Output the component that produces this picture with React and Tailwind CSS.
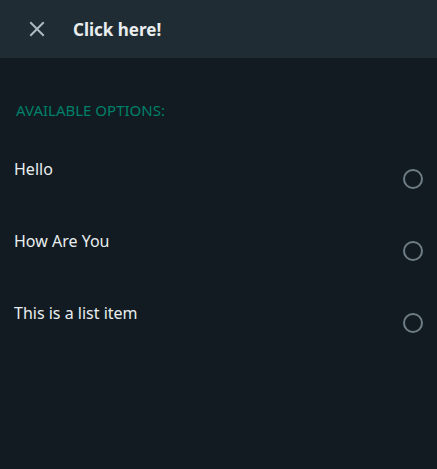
import React from 'react';

const options = ['Hello', 'How Are You', 'This is a list item'];

const App = () => {
  return (
    <div className="min-h-screen w-full bg-[#111b21] font-['Noto_Sans','Open_Sans',sans-serif]">
      {/* Header */}
      <div className="h-[58px] bg-[#202c33] flex items-center pl-[29px]">
        <svg width="16" height="16" viewBox="0 0 16 16" className="text-[#aebac1]">
          <path d="M2 2 L14 14 M14 2 L2 14" stroke="currentColor" strokeWidth="2" strokeLinecap="square" />
        </svg>
        <h1 className="ml-[28px] mt-[2px] text-[17px] font-bold text-[#e9edef]">Click here!</h1>
      </div>

      {/* Options */}
      <div className="pt-[42px]">
        <p className="pl-4 text-[15px] leading-5 text-[#008069]">AVAILABLE OPTIONS:</p>
        <div className="mt-[28px]">
          {options.map((label) => (
            <div key={label} className="h-[72px] flex items-start justify-between pl-[14px] pr-[14px]">
              <span className="pt-[11px] text-[16px] leading-5 text-[#e9edef]">{label}</span>
              <span className="mt-[21px] w-5 h-5 rounded-full border-2 border-[#8696a0]/80" />
            </div>
          ))}
        </div>
      </div>
    </div>
  );
};

export default App;
